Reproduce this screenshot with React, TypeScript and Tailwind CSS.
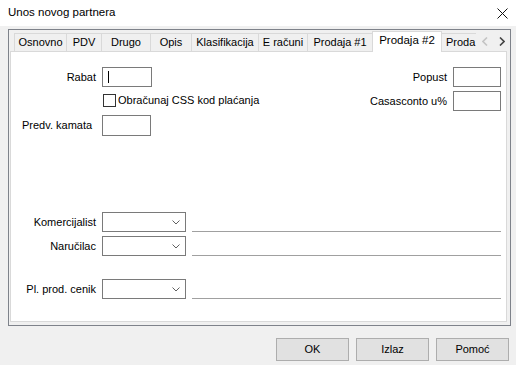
import React from "react";

const tabs = [
  { label: "Osnovno", w: "w-[53px]" },
  { label: "PDV", w: "w-[35px]" },
  { label: "Drugo", w: "w-[49px]" },
  { label: "Opis", w: "w-[41px]" },
  { label: "Klasifikacija", w: "w-[67px]" },
  { label: "E računi", w: "w-[49px]" },
  { label: "Prodaja #1", w: "w-[65px]" },
];

function Chevron() {
  return (
    <svg width="8" height="5" viewBox="0 0 8 5" className="block">
      <polyline points="0.5,0.5 4,4 7.5,0.5" fill="none" stroke="#606060" strokeWidth="1" />
    </svg>
  );
}

function SelectRow({ label, mt }: { label: string; mt: string }) {
  return (
    <div className={`flex h-[20px] items-stretch ${mt}`}>
      <div className="flex w-[85px] items-center justify-end">{label}</div>
      <div className="ml-[6px] flex w-[84px] items-center justify-end border border-[#7a7a7a] bg-white pr-[5px]">
        <Chevron />
      </div>
      <div className="ml-[6px] mr-[5px] flex-1 border-b border-[#a0a0a0]" />
    </div>
  );
}

export default function App() {
  return (
    <div
      className="flex h-[365px] w-[516px] flex-col overflow-hidden bg-[#f0f0f0] text-[11px] text-black"
      style={{ fontFamily: '"Liberation Sans", Arial, sans-serif' }}
    >
      {/* title bar */}
      <div className="flex h-[26px] shrink-0 items-center justify-between bg-white pl-[8px] pr-[8px]">
        <span className="text-[11.5px]">Unos novog partnera</span>
        <svg width="11" height="11" viewBox="0 0 11 11" className="block">
          <path d="M0.5 0.5 L10.5 10.5 M10.5 0.5 L0.5 10.5" stroke="#111" strokeWidth="1" />
        </svg>
      </div>

      {/* tab frame */}
      <div className="ml-[8px] mt-[3px] flex h-[297px] w-[503px] flex-col border border-[#7e828a] pb-[3px] pl-[1px] pr-[3px]">
        <div className="flex h-[21px] shrink-0 items-end pl-[4px]">
          {tabs.map((t, i) => (
            <div
              key={t.label}
              className={`flex h-[18px] ${t.w} items-center justify-center border-t border-r border-[#d9d9d9] bg-[#f0f0f0] ${i === 0 ? "border-l" : ""}`}
            >
              {t.label}
            </div>
          ))}
          <div className="relative z-10 -mb-px -ml-px flex h-[21px] w-[70px] items-center justify-center border-x border-t border-[#d9d9d9] bg-white pb-[2px] text-[11.5px]">
            Prodaja #2
          </div>
          <div className="flex h-[18px] w-[34px] items-center whitespace-nowrap border-t border-[#d9d9d9] bg-[#f0f0f0] pl-[4px]">
            Proda
          </div>
          <div className="flex h-[18px] flex-1 items-center gap-[11px] bg-[#f0f0f0] pb-[2px] pl-[6px]">
            <svg width="6" height="9" viewBox="0 0 6 9" className="block">
              <polyline points="5,0.5 1,4.5 5,8.5" fill="none" stroke="#c4c4c4" strokeWidth="1.6" />
            </svg>
            <svg width="6" height="9" viewBox="0 0 6 9" className="block">
              <polyline points="1,0.5 5,4.5 1,8.5" fill="none" stroke="#444" strokeWidth="1.6" />
            </svg>
          </div>
        </div>

        <div className="flex flex-1 flex-col border border-[#d9d9d9] bg-white">
          <div className="flex justify-between pt-[15px]">
            <div className="flex flex-col">
              <div className="flex h-[20px] items-center">
                <div className="w-[85px] text-right">Rabat</div>
                <div className="ml-[6px] flex h-[20px] w-[50px] items-center border border-[#7a7a7a] pl-[5px]">
                  <span className="h-[12px] w-px bg-black" />
                </div>
              </div>
              <div className="mt-[7px] flex h-[13px] items-center pl-[92px]">
                <span className="h-[13px] w-[13px] border border-[#333]" />
                <span className="ml-[2px]">Obračunaj CSS kod plaćanja</span>
              </div>
              <div className="mt-[8px] flex h-[21px] items-center">
                <div className="w-[85px] pl-[11px]">Predv. kamata</div>
                <div className="ml-[6px] h-[21px] w-[49px] border border-[#7a7a7a]" />
              </div>
            </div>
            <div className="flex flex-col items-end pr-[5px]">
              <div className="flex h-[20px] items-center">
                <span>Popust</span>
                <div className="ml-[6px] h-[20px] w-[48px] border border-[#7a7a7a]" />
              </div>
              <div className="mt-[4px] flex h-[20px] items-center">
                <span>Casasconto u%</span>
                <div className="ml-[6px] h-[20px] w-[48px] border border-[#7a7a7a]" />
              </div>
            </div>
          </div>

          <SelectRow label="Komercijalist" mt="mt-[76px]" />
          <SelectRow label="Naručilac" mt="mt-[4px]" />
          <SelectRow label="Pl. prod. cenik" mt="mt-[23px]" />
        </div>
      </div>

      {/* buttons */}
      <div className="mt-[12px] flex justify-end gap-[7px] pr-[7px]">
        {["OK", "Izlaz", "Pomoć"].map((b) => (
          <button
            key={b}
            className="flex h-[23px] w-[73px] items-center justify-center border border-[#adadad] bg-[#e1e1e1]"
          >
            {b}
          </button>
        ))}
      </div>
    </div>
  );
}
